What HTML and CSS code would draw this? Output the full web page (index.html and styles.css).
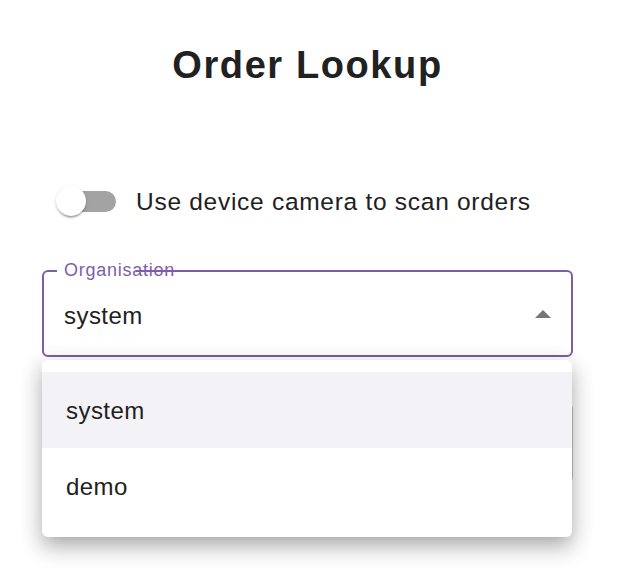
FILE: index.html
```html
<!DOCTYPE html>
<html lang="en">
<head>
<meta charset="utf-8">
<title>Order Lookup</title>
<link rel="stylesheet" href="styles.css">
</head>
<body>
<main class="page">
  <h1 class="title">Order Lookup</h1>

  <label class="switch-row">
    <span class="switch">
      <span class="switch-track"></span>
      <span class="switch-thumb"></span>
    </span>
    <span class="switch-label">Use device camera to scan orders</span>
  </label>

  <div class="field-wrap">
    <div class="select">
      <span class="select-notch"></span>
      <span class="select-label">Organisation</span>
      <span class="select-value">system</span>
      <svg class="select-arrow" viewBox="7 9 10 5" width="16" height="8" aria-hidden="true">
        <path d="M7 14l5-5 5 5z" fill="#757575"/>
      </svg>
    </div>

    <ul class="menu" role="listbox">
      <li class="menu-item selected">system</li>
      <li class="menu-item">demo</li>
    </ul>
  </div>

  <div class="field-under"></div>
</main>
</body>
</html>
```

FILE: styles.css
```css
* {
  box-sizing: border-box;
}

html, body {
  margin: 0;
  background: #ffffff;
}

body {
  min-height: 576px;
  font-family: "Liberation Sans", Arial, sans-serif;
  color: #212121;
}

.page {
  min-height: 576px;
  padding: 44px 51px 0 42px;
}

.title {
  margin: 0;
  font-size: 38px;
  line-height: 42px;
  font-weight: 700;
  text-align: center;
  letter-spacing: 1.6px;
}

.switch-row {
  display: flex;
  align-items: center;
  height: 32px;
  margin-top: 100px;
}

.switch {
  position: relative;
  flex: 0 0 auto;
  width: 60px;
  height: 32px;
  margin-left: 14px;
}

.switch-track {
  position: absolute;
  left: 9px;
  top: 5px;
  width: 51px;
  height: 21px;
  border-radius: 11px;
  background: #a3a3a3;
}

.switch-thumb {
  position: absolute;
  left: 0;
  top: 0;
  width: 30px;
  height: 30px;
  border-radius: 50%;
  background: #ffffff;
  box-shadow: 0 3px 1.5px -1.5px rgba(0,0,0,0.2), 0 1.5px 1.5px 0 rgba(0,0,0,0.14), 0 1.5px 4.5px 0 rgba(0,0,0,0.12);
}

.switch-label {
  margin-left: 20px;
  font-size: 24.5px;
  line-height: 32px;
  letter-spacing: 0.72px;
}

.field-wrap {
  position: relative;
  margin-top: 52px;
  z-index: 2;
}

.select {
  position: relative;
  display: flex;
  align-items: center;
  height: 87px;
  padding: 28px 20px 23px 20px;
  border: 2px solid #7b5fab;
  border-radius: 6px;
}

.select-notch {
  position: absolute;
  top: -2px;
  left: 13px;
  width: 79px;
  height: 2px;
  background: #ffffff;
}

.select-label {
  position: absolute;
  left: 20px;
  top: -13px;
  font-size: 18px;
  line-height: 22px;
  letter-spacing: 0.75px;
  color: #7b5fab;
}

.select-value {
  flex: 1;
  font-size: 24px;
  line-height: 32px;
  letter-spacing: 0.45px;
}

.select-arrow {
  display: block;
  margin-bottom: 4px;
}

.menu {
  position: absolute;
  top: calc(100% + 3px);
  left: 0;
  right: 1px;
  margin: 0;
  padding: 12px 0 13px;
  list-style: none;
  background: #ffffff;
  border-radius: 6px;
  box-shadow: 0 7.5px 15px -7.5px rgba(0,0,0,0.2), 0 12px 21px 1.5px rgba(0,0,0,0.14), 0 4.5px 21px 3px rgba(0,0,0,0.12);
}

.menu-item {
  height: 76px;
  padding: 2px 24px 0;
  font-size: 24px;
  line-height: 74px;
  letter-spacing: 0.45px;
}

.menu-item.selected {
  background: #f3f2f7;
}

.field-under {
  height: 80px;
  margin-top: 46px;
  border: 1px solid #c4c4c4;
  border-radius: 6px;
}
```
